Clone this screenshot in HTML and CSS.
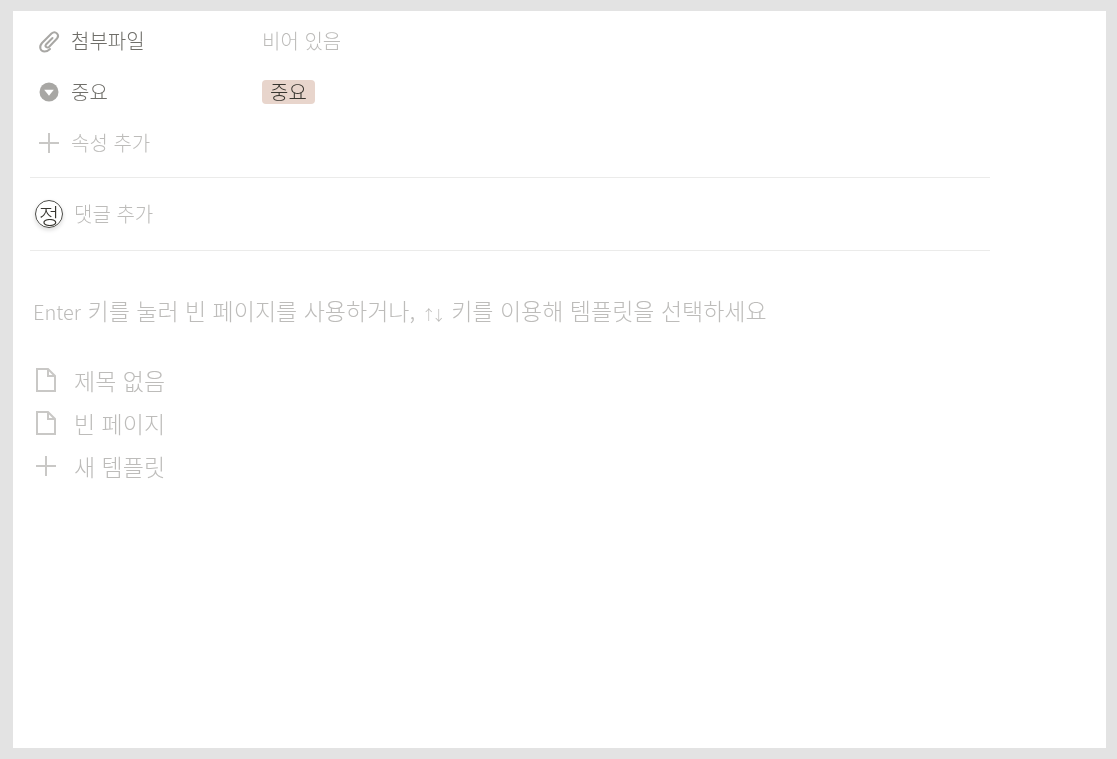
FILE: index.html
```html
<!DOCTYPE html>
<html lang="ko">

<head>
    <meta charset="UTF-8">
    <meta name="viewport" content="width=device-width, initial-scale=1.0">
    <title>Template picker</title>
    <link rel="stylesheet" href="styles.css">
</head>

<body>
    <div class="page">
        <div class="content">
            <!-- Properties -->
            <div class="props">
                <div class="prop">
                    <div class="prop-name">
                        <svg class="icon" width="24" height="24" viewBox="0 0 24 24" fill="none" stroke="#a8a7a4" stroke-width="2" stroke-linecap="round">
                            <path d="M15.5 9 L9 15.5 C7.5 17.5 10 19.5 12 18 L20 9.5 C23 6 18.5 1 14.5 4.5 L5 14 C1.5 18 3.5 22.5 7.5 22.5 C10 22.5 11.5 21.5 13 20" />
                        </svg>
                        <span>첨부파일</span>
                    </div>
                    <div class="prop-value muted">비어 있음</div>
                </div>
                <div class="prop">
                    <div class="prop-name">
                        <svg class="icon" width="24" height="24" viewBox="0 0 24 24">
                            <circle cx="12" cy="12" r="9.5" fill="#a8a7a4" />
                            <path d="M7.2 9.8 H16.8 L12 15.8 Z" fill="#fff" />
                        </svg>
                        <span>중요</span>
                    </div>
                    <div class="prop-value"><span class="tag">중요</span></div>
                </div>
                <div class="prop add-prop">
                    <div class="prop-name">
                        <svg class="icon" width="24" height="24" viewBox="0 0 24 24" stroke="#c9c8c6" stroke-width="2">
                            <path d="M12 2 V22 M2 12 H22" />
                        </svg>
                        <span>속성 추가</span>
                    </div>
                </div>
            </div>

            <!-- Comment -->
            <div class="comment">
                <div class="avatar">정</div>
                <span class="comment-label">댓글 추가</span>
            </div>

            <!-- Templates -->
            <p class="hint"><span class="latin">Enter</span> 키를 눌러 빈 페이지를 사용하거나, <span class="arrows">↑↓</span> 키를 이용해 템플릿을 선택하세요</p>
            <div class="templates">
                <div class="template">
                    <svg class="icon" width="24" height="26" viewBox="0 0 24 26" fill="none" stroke="#c9c8c6" stroke-width="2">
                        <path d="M3 2 H14 L21 9 V24 H3 Z M14 2 V9 H21" />
                    </svg>
                    <span>제목 없음</span>
                </div>
                <div class="template">
                    <svg class="icon" width="24" height="26" viewBox="0 0 24 26" fill="none" stroke="#c9c8c6" stroke-width="2">
                        <path d="M3 2 H14 L21 9 V24 H3 Z M14 2 V9 H21" />
                    </svg>
                    <span>빈 페이지</span>
                </div>
                <div class="template">
                    <svg class="icon" width="24" height="24" viewBox="0 0 24 24" stroke="#c9c8c6" stroke-width="2">
                        <path d="M12 2 V22 M2 12 H22" />
                    </svg>
                    <span>새 템플릿</span>
                </div>
            </div>
        </div>
    </div>
</body>

</html>
```

FILE: styles.css
```css
/* General Styles */
html,
body {
    height: 100%;
}

body {
    margin: 0;
    padding: 11px 11px 11px 13px;
    box-sizing: border-box;
    background-color: #e3e3e3;
    font-family: "Noto Sans CJK KR", "Noto Sans", sans-serif;
    font-weight: 300;
    font-size: 20px;
    color: #37352f;
    overflow: hidden;
}

.page {
    height: 100%;
    background-color: #fff;
    padding: 0 0 0 17px;
}

.content {
    width: 960px;
    will-change: transform; /* keeps text antialiasing gray */
}

.icon {
    flex-shrink: 0;
}

.muted {
    color: #bdbcba;
}

/* Properties */
.props {
    padding-top: 4px;
    padding-bottom: 9px;
    border-bottom: 1px solid #ebebea;
}

.prop {
    display: flex;
    align-items: center;
    height: 51px;
}

.prop-name {
    display: flex;
    align-items: center;
    gap: 10px;
    width: 225px;
    padding-left: 7px;
    color: #6f6e69;
}

.add-prop .prop-name {
    color: #bdbcba;
}

.tag {
    display: inline-block;
    padding: 0 8px;
    line-height: 24px;
    border-radius: 4px;
    background-color: #e8d5cc;
    color: #37352f;
}

/* Comment */
.comment {
    display: flex;
    align-items: center;
    gap: 11px;
    height: 72px;
    padding-left: 5px;
    border-bottom: 1px solid #ebebea;
}

.comment-label {
    margin-bottom: 2px;
    color: #bdbcba;
}

.avatar {
    width: 26px;
    height: 26px;
    border: 1px solid #4a4a46;
    border-radius: 50%;
    display: flex;
    align-items: center;
    justify-content: center;
    font-size: 22px;
    line-height: 1;
    box-shadow: 0 2px 4px rgba(15, 15, 15, 0.15);
}

/* Templates */
.hint {
    margin: 41px 0 0 3px;
    font-size: 23px;
    line-height: 36px;
    color: #bdbcba;
}

.latin {
    font-size: 20px;
}

.arrows {
    font-size: 14px;
    letter-spacing: -4px;
    margin-right: 3px;
}

.templates {
    margin-top: 26px;
    font-size: 23px;
}

.template {
    display: flex;
    align-items: center;
    gap: 16px;
    height: 43px;
    padding-left: 4px;
    color: #bdbcba;
}
```
